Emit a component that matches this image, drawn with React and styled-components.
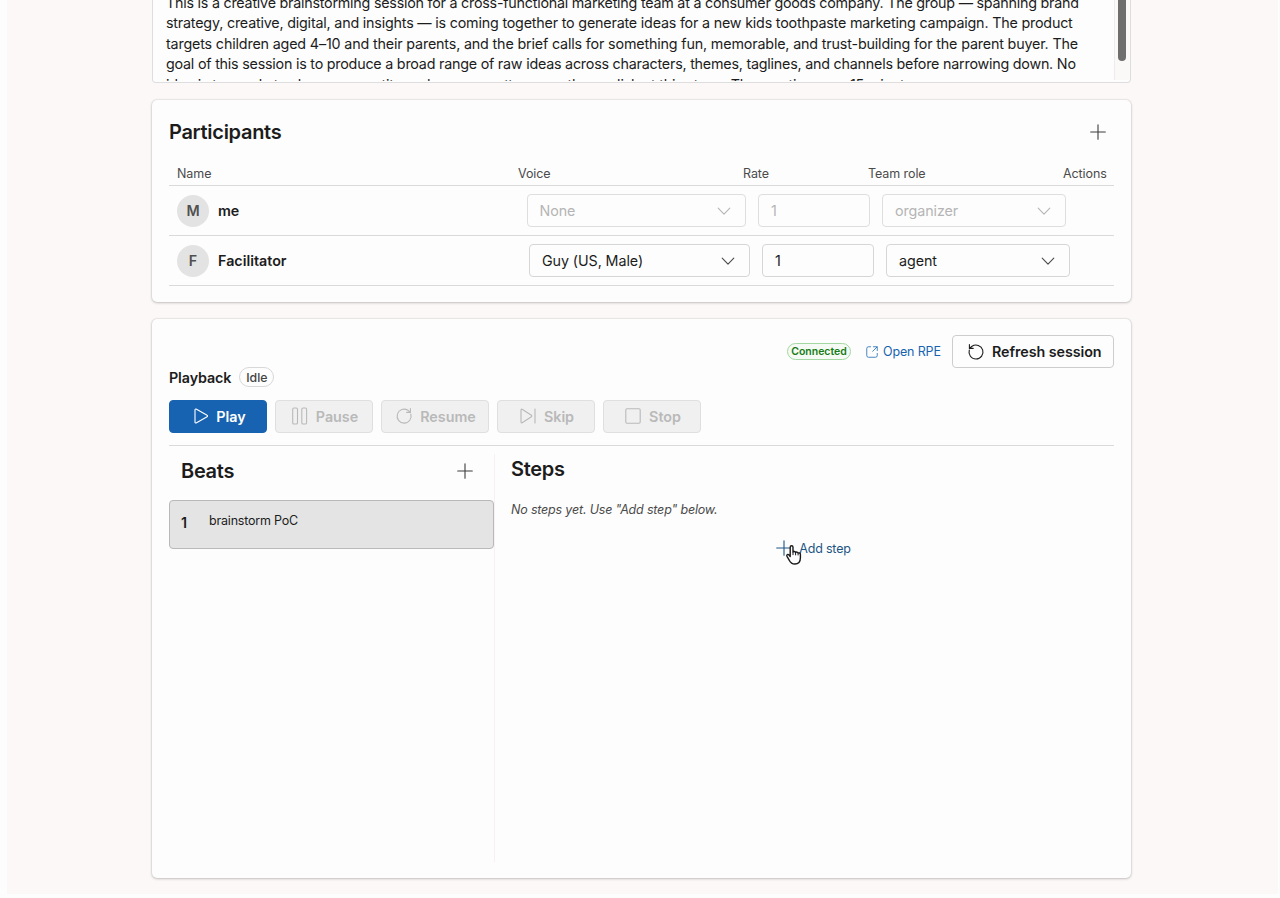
import styled, { createGlobalStyle, css } from 'styled-components'

const GlobalStyle = createGlobalStyle`
  * {
    box-sizing: border-box;
  }
  body {
    margin: 0;
    overflow: hidden;
    background: #fdfdfd;
    color: #1c1c1c;
    font-family: Inter, 'Liberation Sans', sans-serif;
    font-size: 14.3px;
  }
  button, h2, p {
    margin: 0;
    font: inherit;
  }
`

// each line carries its own tracking
const briefLines = [
  ['This is a creative brainstorming session for a cross-functional marketing team at a consumer goods company. The group — spanning brand', -0.228],
  ['strategy, creative, digital, and insights — is coming together to generate ideas for a new kids toothpaste marketing campaign. The product', -0.19],
  ['targets children aged 4–10 and their parents, and the brief calls for something fun, memorable, and trust-building for the parent buyer. The', -0.157],
  ['goal of this session is to produce a broad range of raw ideas across characters, themes, taglines, and channels before narrowing down. No', -0.218],
  ['idea is too early to share — quantity and energy matter more than polish at this stage. The meeting runs 15 minutes.', -0.19]
]

const participants = [
  { name: 'me', voice: 'None', rate: '1', role: 'organizer', disabled: true },
  { name: 'Facilitator', voice: 'Guy (US, Male)', rate: '1', role: 'agent' }
]

function Icon ({ size = 20, children }) {
  return (
    <svg
      width={size}
      height={size}
      viewBox='0 0 20 20'
      fill='none'
      stroke='currentColor'
      strokeWidth='1.1'
      strokeLinecap='round'
      strokeLinejoin='round'
    >
      {children}
    </svg>
  )
}

const PlusIcon = () => (
  <Icon><path d='M10 2.7v14.6M2.7 10h14.6' /></Icon>
)
const ChevronIcon = () => (
  <Icon><path d='M4.2 7.2l5.8 6 5.8-6' /></Icon>
)
const PlayIcon = () => (
  <Icon><path d='M5 3.8c0-.6.6-1 1.1-.7l11 6.2c.6.3.6 1.1 0 1.4l-11 6.2c-.5.3-1.1-.1-1.1-.7V3.8z' /></Icon>
)
const PauseIcon = () => (
  <Icon>
    <rect x='2.7' y='2' width='4.8' height='16' rx='1.3' />
    <rect x='11.8' y='2' width='4.8' height='16' rx='1.3' />
  </Icon>
)
const ResumeIcon = () => (
  <Icon><path d='M16.8 8A7 7 0 1 1 14 4.3l2.2 1.9M16.4 2.6v3.8h-3.8' /></Icon>
)
const SkipIcon = () => (
  <Icon><path d='M3 3.9c0-.6.6-1 1.1-.6l9.3 6c.5.4.5 1.1 0 1.4l-9.3 6c-.5.4-1.1 0-1.1-.6V3.9zM17 3v14' /></Icon>
)
const StopIcon = () => (
  <Icon><rect x='2.8' y='2.8' width='14.4' height='14.4' rx='1.2' /></Icon>
)
const RefreshIcon = () => (
  <Icon><path d='M3.3 8A7 7 0 1 0 6 4.3L3.6 6.2M3.4 2.6v3.8h3.8' /></Icon>
)
const OpenIcon = () => (
  <Icon size={14}>
    <path d='M8 2.5H5A2.5 2.5 0 0 0 2.5 5v10A2.5 2.5 0 0 0 5 17.5h10a2.5 2.5 0 0 0 2.5-2.5v-3M12 2.5h5.5V8M17.2 2.8L11 9' />
  </Icon>
)

function HandCursor () {
  return (
    <Cursor width='18' height='22' viewBox='0 0 18 22'>
      <path
        d='M5.2 12.6V3.2c0-2 2.8-2 2.8 0v5c.4-1 2.4-.9 2.6.4.6-.9 2.3-.6 2.5.6.8-.7 2.3-.2 2.3 1.1v3.4c0 4-2 6.3-5.6 6.3-3 0-4.3-1.3-5.6-3.8L2 12.4c-.9-1.7 1-2.7 2-1.4l1.2 1.6z'
        fill='#fff'
        stroke='#1a1a1a'
        strokeWidth='1.4'
        strokeLinejoin='round'
      />
      <path d='M8 8.5v2.6M10.6 9v2.3M13.1 9.6v1.8' stroke='#1a1a1a' strokeWidth='1' />
    </Cursor>
  )
}

function Select ({ value, width, disabled }) {
  return (
    <Field $width={width} $disabled={disabled}>
      {value}
      <ChevronIcon />
    </Field>
  )
}

function App () {
  return (
    <>
      <GlobalStyle />
      <Page>
        <Brief>
          <BriefText>
            {briefLines.map(([line, spacing]) => (
              <BriefLine key={line} $spacing={spacing}>{line}</BriefLine>
            ))}
          </BriefText>
          <ScrollTrack><ScrollThumb /></ScrollTrack>
        </Brief>

        <ParticipantsCard>
          <CardHeader>
            <Title>Participants</Title>
            <IconButton><PlusIcon /></IconButton>
          </CardHeader>
          <TableHead>
            <span>Name</span>
            <span>Voice</span>
            <span>Rate</span>
            <span>Team role</span>
            <span>Actions</span>
          </TableHead>
          {participants.map(p => (
            <Row key={p.name}>
              <Avatar>{p.name[0].toUpperCase()}</Avatar>
              <Name $width={p.disabled ? 296.5 : 299}>{p.name}</Name>
              <Select value={p.voice} width={p.disabled ? 219.5 : 221} disabled={p.disabled} />
              <Field $width={112} $disabled={p.disabled}>{p.rate}</Field>
              <Select value={p.role} width={184} disabled={p.disabled} />
            </Row>
          ))}
        </ParticipantsCard>

        <SessionCard>
          <SessionBar>
            <Connected>Connected</Connected>
            <OpenLink><OpenIcon />Open RPE</OpenLink>
            <RefreshButton><RefreshIcon />Refresh session</RefreshButton>
          </SessionBar>
          <PlaybackRow>
            <strong>Playback</strong>
            <Idle>Idle</Idle>
          </PlaybackRow>
          <Controls>
            <ControlButton $width={98} $primary><PlayIcon />Play</ControlButton>
            <ControlButton $width={98}><PauseIcon />Pause</ControlButton>
            <ControlButton $width={108}><ResumeIcon />Resume</ControlButton>
            <ControlButton $width={98}><SkipIcon />Skip</ControlButton>
            <ControlButton $width={98}><StopIcon />Stop</ControlButton>
          </Controls>
          <Columns>
            <Beats>
              <BeatsHeader>
                <Title>Beats</Title>
                <IconButton><PlusIcon /></IconButton>
              </BeatsHeader>
              <Beat>
                <b>1</b>
                <span>brainstorm PoC</span>
              </Beat>
            </Beats>
            <Steps>
              <Title>Steps</Title>
              <Empty>No steps yet. Use "Add step" below.</Empty>
              <AddStep>
                <PlusIcon />
                Add step
                <HandCursor />
              </AddStep>
            </Steps>
          </Columns>
        </SessionCard>
      </Page>
    </>
  )
}

export default App

const Page = styled.main`
  height: 894px;
  margin: 0 2px 0 7px;
  padding: 0 147px 0 145px;
  display: flex;
  flex-direction: column;
  overflow: hidden;
  background: #fcf8f7;
`

const Brief = styled.section`
  flex: none;
  display: flex;
  justify-content: space-between;
  height: 83px;
  border: 1px solid #dedede;
  border-top: 0;
  border-radius: 0 0 4px 4px;
  background: #fdfdfd;
  overflow: hidden;
`

const BriefText = styled.div`
  height: 88px;
  margin-top: -7px;
  padding-left: 13px;
  overflow: hidden;
  white-space: nowrap;
  line-height: 20.4px;
`

const BriefLine = styled.p`
  letter-spacing: ${p => p.$spacing}px;
`

const ScrollTrack = styled.div`
  width: 16px;
  height: 80px;
  padding-left: 3px;
  border-left: 1px solid #ececec;
  background: #fbf8f8;
`

const ScrollThumb = styled.div`
  width: 8px;
  height: 61px;
  border-radius: 0 0 4px 4px;
  background: #6e6e6e;
`

const card = css`
  flex: none;
  padding: 16px 17px;
  border-radius: 5px;
  background: #fdfdfd;
  box-shadow: 0 0 2px rgba(0, 0, 0, 0.2), 0 1px 3px rgba(0, 0, 0, 0.18);
`

const ParticipantsCard = styled.section`
  ${card}
  height: 202px;
  margin-top: 17px;
`

const CardHeader = styled.header`
  display: flex;
  align-items: center;
  justify-content: space-between;
  height: 32px;
`

const Title = styled.h2`
  font-size: 20px;
  font-weight: 600;
  line-height: 30px;
  letter-spacing: -0.3px;
`

const IconButton = styled.button`
  display: grid;
  place-items: center;
  width: 32px;
  height: 32px;
  padding: 0;
  border: 0;
  background: none;
  color: #3d3d3d;
`

const TableHead = styled.div`
  display: grid;
  grid-template-columns: 341px 225px 125px 195px auto;
  align-items: center;
  height: 38px;
  padding: 14px 0 0 8px;
  border-bottom: 1px solid #dadada;
  color: #4b4b4b;
  font-size: 12.5px;
  letter-spacing: -0.08px;
`

const Row = styled.div`
  display: flex;
  align-items: center;
  gap: 12px;
  height: 50px;
  padding-left: 8px;
  border-bottom: 1px solid #dadada;
`

const Avatar = styled.div`
  display: grid;
  place-items: center;
  width: 32px;
  height: 32px;
  margin-right: -3px;
  border-radius: 50%;
  background: #e3e3e3;
  color: #505050;
  font-weight: 600;
`

const Name = styled.div`
  width: ${p => p.$width}px;
  font-weight: 600;
`

const Field = styled.div`
  display: flex;
  align-items: center;
  justify-content: space-between;
  width: ${p => p.$width}px;
  height: 33px;
  padding: 0 11px 0 12px;
  border: 1px solid ${p => (p.$disabled ? '#dedede' : '#d6d6d6')};
  border-radius: 4px;
  color: ${p => (p.$disabled ? '#b5b5b5' : '#1c1c1c')};
  letter-spacing: -0.08px;
  svg {
    color: ${p => (p.$disabled ? '#b5b5b5' : '#4a4a4a')};
  }
`

const SessionCard = styled.section`
  ${card}
  display: flex;
  flex-direction: column;
  height: 559px;
  margin-top: 17px;
`

const SessionBar = styled.div`
  display: flex;
  justify-content: flex-end;
  align-items: flex-start;
  height: 32px;
`

const Connected = styled.span`
  display: grid;
  place-items: center;
  width: 64px;
  height: 17px;
  margin: 8px 14px 0 0;
  border: 1px solid #a3d8a3;
  border-radius: 9px;
  background: #f5faf4;
  color: #177a17;
  font-size: 10.5px;
  font-weight: 600;
`

const OpenLink = styled.a`
  display: flex;
  align-items: center;
  gap: 4px;
  width: 87px;
  height: 33px;
  white-space: nowrap;
  color: #1664b0;
  font-size: 12.5px;
  letter-spacing: -0.15px;
`

const RefreshButton = styled.button`
  display: flex;
  align-items: center;
  gap: 6px;
  width: 162px;
  height: 33px;
  padding: 0 0 0 13px;
  border: 1px solid #cdcdcd;
  border-radius: 4px;
  background: #fdfdfd;
  color: #1c1c1c;
  font-weight: 600;
  letter-spacing: -0.06px;
  white-space: nowrap;
`

const PlaybackRow = styled.div`
  display: flex;
  align-items: center;
  gap: 8px;
  height: 20px;
  strong {
    font-weight: 600;
    letter-spacing: -0.1px;
  }
`

const Idle = styled.span`
  display: grid;
  place-items: center;
  width: 35px;
  height: 20px;
  border: 1px solid #d8d8d8;
  border-radius: 10px;
  color: #444;
  font-size: 12.3px;
  font-weight: 500;
`

const Controls = styled.div`
  display: flex;
  gap: 8px;
  height: 59px;
  padding-top: 13px;
  border-bottom: 1px solid #dadada;
`

const ControlButton = styled.button`
  display: flex;
  align-items: center;
  justify-content: center;
  gap: 6px;
  width: ${p => p.$width}px;
  height: 33px;
  padding: 0 0 1px;
  border: 1px solid ${p => (p.$primary ? '#1763b1' : '#dfdfdf')};
  border-radius: 4px;
  background: ${p => (p.$primary ? '#1763b1' : '#f0f0f0')};
  color: ${p => (p.$primary ? '#fff' : '#b9b9b9')};
  font-weight: 600;
`

const Columns = styled.div`
  display: flex;
  flex: 1;
  padding-top: 8px;
`

const Beats = styled.div`
  width: 326px;
  border-right: 1px solid #f7f1f1;
`

const BeatsHeader = styled.header`
  display: flex;
  align-items: center;
  justify-content: space-between;
  height: 46px;
  padding: 0 13px 13px 12px;
`

const Beat = styled.div`
  display: flex;
  gap: 22px;
  width: 325px;
  height: 49px;
  padding: 12px 11px;
  border: 1px solid #b9b9b9;
  border-radius: 4px;
  background: #e4e4e4;
  b {
    padding-top: 1px;
    font-weight: 600;
  }
  span {
    font-size: 12.5px;
    letter-spacing: -0.2px;
  }
`

const Steps = styled.div`
  flex: 1;
  padding-left: 16px;
`

const Empty = styled.p`
  margin-top: 18px;
  color: #4b4b4b;
  font-size: 12.5px;
  font-style: italic;
  letter-spacing: -0.18px;
`

const AddStep = styled.button`
  position: relative;
  display: flex;
  align-items: center;
  gap: 5px;
  margin: 21px auto 0;
  padding: 0;
  border: 0;
  background: none;
  color: #1d5685;
  font-size: 12.5px;
  letter-spacing: -0.2px;
`

const Cursor = styled.svg`
  position: absolute;
  left: 11px;
  top: 6px;
`
